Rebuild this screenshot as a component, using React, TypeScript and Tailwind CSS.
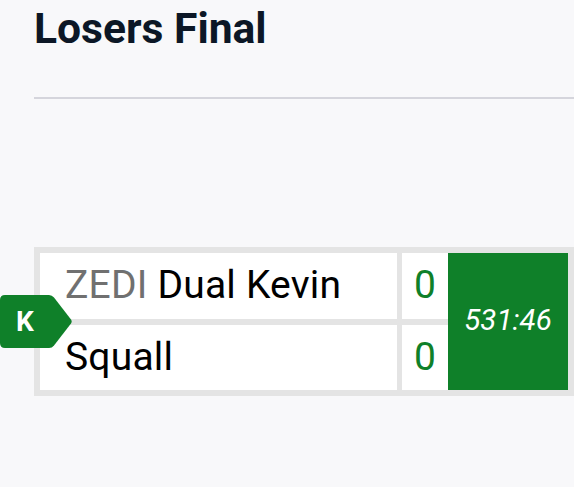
import React from "react";

const GREEN = "#0f8029";

export default function App() {
  return (
    <div
      className="relative w-[574px] h-[487px] overflow-hidden bg-[#f8f8fa]"
      style={{ fontFamily: "Roboto, 'Liberation Sans', sans-serif" }}
    >
      <div className="pl-[34px] pt-[7px] text-[42.6px] leading-none font-bold text-[#0c1726]">
        Losers Final
      </div>
      <div className="ml-[34px] mt-[47px] h-[2px] bg-[#d5d5dc]" />
      <div className="ml-[34px] mt-[148px] w-[540px] bg-[#e4e4e4] p-[6px] flex">
        <div className="flex flex-col gap-[6px]">
          <div className="flex gap-[5px] h-[66px]">
            <div className="w-[357px] bg-white flex items-center pl-[25px] text-[39px] tracking-[0.2px] text-black leading-none whitespace-pre">
              <span className="text-[#707070]">ZEDI</span>
              <span> Dual Kevin</span>
            </div>
            <div className="w-[46px] bg-white flex items-center justify-center text-[39px] leading-none text-[#0f8029]">
              0
            </div>
          </div>
          <div className="flex gap-[5px] h-[65px]">
            <div className="w-[357px] bg-white flex items-center pl-[25px] text-[39px] tracking-[0.2px] text-black leading-none">
              Squall
            </div>
            <div className="w-[46px] bg-white flex items-center justify-center text-[39px] leading-none text-[#0f8029]">
              0
            </div>
          </div>
        </div>
        <div className="w-[120px] bg-[#0f8029] flex items-center justify-center text-white italic text-[29.5px] leading-none">
          531:46
        </div>
      </div>
      <div className="absolute left-0 top-[295px] w-[72px] h-[53px]">
        <svg width="72" height="53" viewBox="0 0 72 53" className="absolute inset-0">
          <path
            d="M5 0 H49 Q52 0 54 2.5 L71 24.5 Q72.3 26.5 71 28.5 L54 50.5 Q52 53 49 53 H5 Q0 53 0 48 V5 Q0 0 5 0 Z"
            fill={GREEN}
          />
        </svg>
        <div className="absolute left-0 top-0 w-[50px] h-[53px] flex items-center justify-center text-white font-bold text-[28px] leading-none">
          K
        </div>
      </div>
    </div>
  );
}
